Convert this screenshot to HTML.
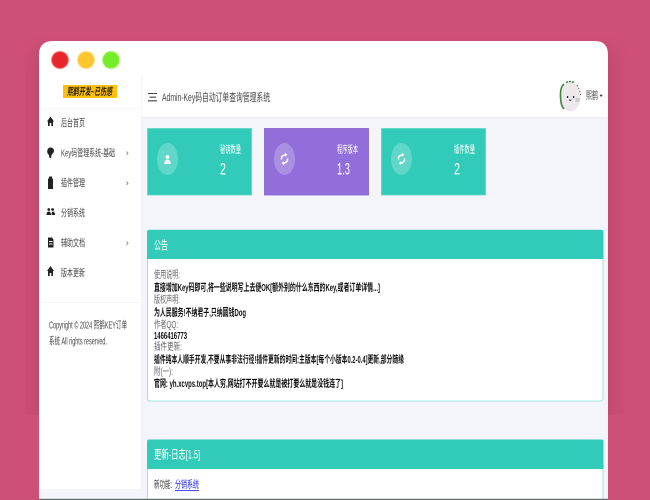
<!DOCTYPE html>
<html lang="zh-CN">
<head>
<meta charset="utf-8">
<title>Admin-Key码自动订单查询管理系统</title>
<style>
html,body{margin:0;padding:0;width:650px;height:500px;overflow:hidden;background:#cd5076}
svg{display:block}
text{font-family:"Liberation Sans","Noto Sans CJK SC",sans-serif;dominant-baseline:central}
.n{font-size:10px;fill:#444}
.g{font-size:10px;fill:#666}
.d{font-size:10px;fill:#111;font-weight:bold}
.w{font-size:10px;fill:#fff}
.h{font-size:12px;fill:#fff}
.big{font-size:17px;fill:#fff}
</style>
</head>
<body>
<svg width="650" height="500" viewBox="0 0 650 500" xmlns="http://www.w3.org/2000/svg">
<defs>
<filter id="b1" x="-20%" y="-20%" width="140%" height="140%"><feGaussianBlur stdDeviation="0.3"/></filter>
<filter id="b2" x="-20%" y="-20%" width="140%" height="140%"><feGaussianBlur stdDeviation="0.6"/></filter>
<filter id="sh" x="-10%" y="-10%" width="120%" height="120%"><feGaussianBlur stdDeviation="7"/></filter>
<clipPath id="cl"><rect x="0" y="0" width="650" height="415"/></clipPath>
</defs>
<rect width="650" height="500" fill="#cd5076"/>
<g clip-path="url(#cl)">
<rect x="33" y="50" width="581" height="420" fill="#a53b5b" opacity=".3" filter="url(#sh)"/>
</g>

<!-- window -->
<path d="M39 500V55Q39 41 53 41H595Q608 41 608 55V500Z" fill="#fff"/>
<rect x="141" y="118" width="467" height="382" fill="#f4f5fa"/>
<rect x="39" y="489" width="102" height="11" fill="#f4f5fa"/>
<rect x="141" y="75" width="1" height="43" fill="#f4f5f9"/>
<rect x="141" y="117" width="467" height="1.5" fill="#eceef4"/>
<rect x="39" y="108" width="102" height="1" fill="#f6f6f9"/>
<rect x="39" y="302" width="102" height="1" fill="#f6f6f9"/>

<g filter="url(#b2)">
<circle cx="60" cy="60" r="8.6" fill="#e8262c"/>
<circle cx="86" cy="60" r="8.6" fill="#fdc62d"/>
<circle cx="111" cy="60" r="8.6" fill="#77ed2c"/>
</g>

<g filter="url(#b1)">
<!-- logo -->
<rect x="63" y="85" width="54" height="13" fill="#fdc010"/>
<text x="67" y="92.5" font-size="10" font-style="italic" font-weight="bold" fill="#2a2000" textLength="45" lengthAdjust="spacingAndGlyphs">熙鹤开发~已伤感</text>

<!-- sidebar icons -->
<g fill="#222">
<path d="M50.5 116.5L54 121.5H53V126H51.3V123H49.7V126H48V121.5H47Z"/>
<path d="M50.5 147.5C53 147.5 54 149 54 151C54 153 52 153.5 51.5 155.5L51 158H49.5L49 155C47.5 154 47 152.5 47.3 150.5C47.7 148.5 49 147.5 50.5 147.5Z"/>
<path d="M48 178.5H49V176.5H52V178.5H53V189H48Z"/>
<circle cx="48.8" cy="209.5" r="1.4"/><circle cx="52.6" cy="209.5" r="1.4"/>
<path d="M46.5 215Q46.5 211.5 48.8 211.5Q51 211.5 51 215ZM51.5 215Q51.5 211.5 52.8 211.5Q55 211.5 55 215Z"/>
<path d="M48 237.5H52L53.5 239.5V247.5H48ZM49 241V242H52.5V241ZM49 243.5V244.5H52.5V243.5Z" fill-rule="evenodd"/>
<path d="M50.5 266L54 271H53V276H51.3V273H49.7V276H48V271H47Z"/>
</g>
<g fill="none" stroke="#888" stroke-width=".9">
<path d="M126.5 151.5l1.5 1.7-1.5 1.7"/>
<path d="M126.5 181.5l1.5 1.7-1.5 1.7"/>
<path d="M126.5 241.5l1.5 1.7-1.5 1.7"/>
</g>

<!-- sidebar text -->
<text class="n" x="61" y="124" textLength="24" lengthAdjust="spacingAndGlyphs">后台首页</text>
<text class="n" x="61" y="154" textLength="54" lengthAdjust="spacingAndGlyphs">Key码管理系统-基础</text>
<text class="n" x="61" y="184" textLength="24" lengthAdjust="spacingAndGlyphs">插件管理</text>
<text class="n" x="61" y="214" textLength="24" lengthAdjust="spacingAndGlyphs">分销系统</text>
<text class="n" x="61" y="244" textLength="24" lengthAdjust="spacingAndGlyphs">辅助文档</text>
<text class="n" x="61" y="274" textLength="24" lengthAdjust="spacingAndGlyphs">版本更新</text>
<text class="n" x="49" y="326" textLength="78" lengthAdjust="spacingAndGlyphs">Copyright © 2024 熙鹤KEY订单</text>
<text class="n" x="49" y="342" textLength="58" lengthAdjust="spacingAndGlyphs">系统 All rights reserved.</text>

<!-- header -->
<path d="M148 93.5h9M149.5 97.2h6.5M148 100.8h9" stroke="#444" stroke-width="1.1" fill="none"/>
<text x="162" y="98" font-size="11" fill="#444" textLength="108" lengthAdjust="spacingAndGlyphs">Admin-Key码自动订单查询管理系统</text>

<!-- avatar -->
<ellipse cx="570.5" cy="96.5" rx="10" ry="15" fill="#ece8ec"/>
<path d="M561 102Q559 88 564 84" stroke="#3b8a3b" stroke-width="1.6" fill="none"/>
<path d="M564 109Q561.5 106 561 102" stroke="#3b8a3b" stroke-width="1.6" fill="none"/>
<path d="M566 82.5Q570 80.5 574 82.5" stroke="#3b7a3b" stroke-width="1.4" fill="none" stroke-dasharray="2 1"/>
<path d="M577 85Q580 90 580.5 95" stroke="#555" stroke-width="1" fill="none" stroke-dasharray="1.2 2"/>
<rect x="567" y="96" width="1.2" height="2" fill="#222"/><rect x="573" y="96" width="1.2" height="2" fill="#222"/>
<path d="M569 99.5l1.2 1.2 1.2-1.2" stroke="#222" stroke-width=".7" fill="none"/>
<path d="M575.5 99h4.5M575.5 101h4" stroke="#999" stroke-width=".7"/>
<text class="n" x="586" y="96.5" textLength="12" lengthAdjust="spacingAndGlyphs">熙鹤</text>
<path d="M599.5 94.8h3.2l-1.6 2.2z" fill="#333"/>

<!-- cards -->
<rect x="147.5" y="128.5" width="104" height="66.5" fill="#31cbba" stroke="#5dd8ca" stroke-width=".8"/>
<rect x="264.5" y="128.5" width="104" height="66.5" fill="#926edb" stroke="#8460cf" stroke-width=".8"/>
<rect x="381.5" y="128.5" width="104" height="66.5" fill="#31cbba" stroke="#5dd8ca" stroke-width=".8"/>
<ellipse cx="167.5" cy="159" rx="10.5" ry="16" fill="#fff" fill-opacity=".23"/>
<ellipse cx="284.5" cy="159" rx="10.5" ry="16" fill="#fff" fill-opacity=".23"/>
<ellipse cx="401.5" cy="159" rx="10.5" ry="16" fill="#fff" fill-opacity=".23"/>
<g fill="#fff">
<circle cx="167.5" cy="157" r="1.9"/>
<path d="M164.3 164Q164.3 159.6 167.5 159.6Q170.7 159.6 170.7 164Z"/>
</g>
<g fill="none" stroke="#fff" stroke-width="1.5">
<path d="M281.5 159.5Q281 155.5 285.5 154.8M287.5 158.5Q288 162.5 283.5 163.2"/>
<path d="M398.5 159.5Q398 155.5 402.5 154.8M404.5 158.5Q405 162.5 400.5 163.2"/>
</g>
<path d="M285 152.8l2.4 2-2.4 2zM284 161.3l-2.4 2 2.4 2z" fill="#fff"/>
<path d="M402 152.8l2.4 2-2.4 2zM401 161.3l-2.4 2 2.4 2z" fill="#fff"/>

<text class="w" x="220" y="150.5" textLength="21" lengthAdjust="spacingAndGlyphs">秘钥数量</text>
<text class="w" x="337" y="150.5" textLength="21" lengthAdjust="spacingAndGlyphs">程序版本</text>
<text class="w" x="454" y="150.5" textLength="21" lengthAdjust="spacingAndGlyphs">插件数量</text>
<text class="big" x="220" y="169" textLength="6" lengthAdjust="spacingAndGlyphs">2</text>
<text class="big" x="337" y="169" textLength="13" lengthAdjust="spacingAndGlyphs">1.3</text>
<text class="big" x="454" y="169" textLength="6" lengthAdjust="spacingAndGlyphs">2</text>

<!-- panel 1 -->
<rect x="147.5" y="230" width="455.5" height="171" rx="2" fill="#fff" stroke="#a0e5dd" stroke-width="1"/>
<path d="M147 259V232Q147 230 149 230H601.5Q603.5 230 603.5 232V259Z" fill="#31cbba"/>
<text class="h" x="154" y="245.5" textLength="14" lengthAdjust="spacingAndGlyphs">公告</text>
<text class="g" x="154" y="275.5" textLength="26" lengthAdjust="spacingAndGlyphs">使用说明:</text>
<text class="d" x="154" y="288.5" textLength="226" lengthAdjust="spacingAndGlyphs">直接增加Key码即可,将一些说明写上去便OK[额外别的什么东西的Key,或者订单详情...]</text>
<text class="g" x="154" y="300.5" textLength="26" lengthAdjust="spacingAndGlyphs">版权声明:</text>
<text class="d" x="154" y="313.5" textLength="92" lengthAdjust="spacingAndGlyphs">为人民服务!不纳君子,只纳圆钱Dog</text>
<text class="g" x="154" y="325.5" textLength="24" lengthAdjust="spacingAndGlyphs">作者QQ:</text>
<text class="d" x="154" y="336.5" textLength="33" lengthAdjust="spacingAndGlyphs">1466416773</text>
<text class="g" x="154" y="347.5" textLength="28" lengthAdjust="spacingAndGlyphs">插件更新:</text>
<text class="d" x="154" y="360.5" textLength="250" lengthAdjust="spacingAndGlyphs">插件纯本人顺手开发,不要从事非法行径!插件更新的时间:主版本[每个小版本0.2-0.4]更新,部分随缘</text>
<text class="g" x="154" y="372.5" textLength="19" lengthAdjust="spacingAndGlyphs">附(一):</text>
<text class="d" x="154" y="384.5" textLength="189" lengthAdjust="spacingAndGlyphs">官网: yh.xcvps.top[本人穷,网站打不开要么就是被打要么就是没钱连了]</text>

<!-- panel 2 -->
<rect x="147.5" y="440" width="455.5" height="70" rx="2" fill="#fff" stroke="#a0e5dd" stroke-width="1"/>
<path d="M147 469V441.5Q147 439.5 149 439.5H601.5Q603.5 439.5 603.5 441.5V469Z" fill="#31cbba"/>
<text class="h" x="154" y="454.5" textLength="46" lengthAdjust="spacingAndGlyphs">更新-日志[1.5]</text>
<text x="154" y="485.5" font-size="10" fill="#333" textLength="18" lengthAdjust="spacingAndGlyphs">新功能:</text>
<text x="175" y="485.5" font-size="10" fill="#1a1aee" textLength="24" lengthAdjust="spacingAndGlyphs">分销系统</text>
<rect x="175" y="490" width="24" height=".8" fill="#1a1aee"/>
</g>
<rect x="39" y="498.8" width="569" height="1.2" fill="#5f6a6a"/>
</svg>
</body>
</html>
